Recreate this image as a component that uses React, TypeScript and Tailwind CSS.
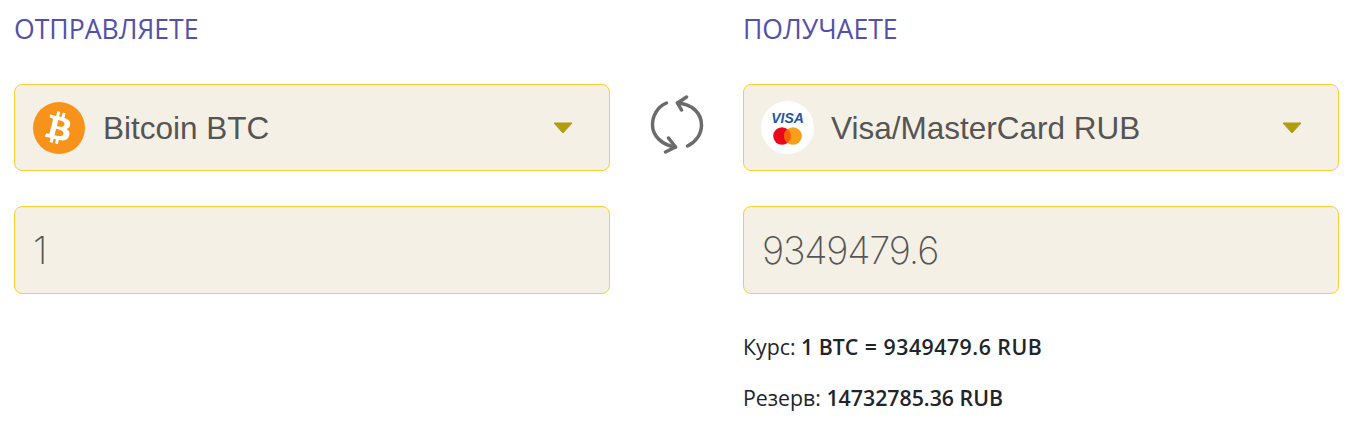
import { FaBtc } from 'react-icons/fa';

const Caret = () => (
    <svg width="20" height="12" viewBox="0 0 20 12" className="shrink-0">
        <path d="M1 1 H19 L10 11 Z" fill="#b39c0c" stroke="#b39c0c" strokeWidth="1" strokeLinejoin="round" />
    </svg>
);

const SwapIcon = () => (
    <svg width="56" height="60" viewBox="0 0 56 60" fill="none" stroke="#6b6b6b" strokeWidth="3.5" strokeLinecap="round" strokeLinejoin="round">
        <path d="M17.5 8 C8 12 3.5 21 3.5 30 C3.5 41 13 50 26.5 52" />
        <path d="M19.5 43 L26.5 52 L16.5 57" />
        <path d="M38.5 51 C47 47 52.5 39 52.5 30 C52.5 18 43 9 28.5 8" />
        <path d="M37.5 2 L28.5 8 L32.5 15" />
    </svg>
);

const BtcLogo = () => (
    <div className="w-[52px] h-[52px] ml-[1px] mr-[1px] rounded-full bg-[#f7931a] flex items-center justify-center shrink-0">
        <FaBtc className="w-[32px] h-[32px] text-white rotate-[14deg]" />
    </div>
);

const CardLogo = () => (
    <div className="w-[53px] h-[53px] rounded-full bg-white flex flex-col items-center justify-center shrink-0">
        <span className="font-['Liberation_Sans',sans-serif] italic font-bold text-[14px] leading-[14px] text-[#23569f]">VISA</span>
        <svg width="29" height="18" viewBox="0 0 29 18" className="mt-[2px]">
            <circle cx="9" cy="9" r="8.8" fill="#e8091e" />
            <circle cx="20" cy="9" r="8.8" fill="#f79e1b" />
            <path d="M14.5 2.1 A8.8 8.8 0 0 1 14.5 15.9 A8.8 8.8 0 0 1 14.5 2.1 Z" fill="#fb5f00" />
        </svg>
    </div>
);

const Select = ({ logo, label }: { logo: React.ReactNode; label: string }) => (
    <div className="h-[87px] rounded-[8px] border border-[#fccf2f] bg-[#f5f0e5] flex items-center pl-[17px] pr-[36px]">
        {logo}
        <span className="ml-[17px] pt-[2px] flex-1 font-['Liberation_Sans',sans-serif] text-[31.5px] text-[#555555]">{label}</span>
        <Caret />
    </div>
);

const Amount = ({ value }: { value: string }) => (
    <div className="h-[88px] mt-[35px] rounded-[8px] border border-[#fccf2f] bg-[#f5f0e5] flex items-center pl-[18px] font-['Inter',sans-serif] font-[250] text-[38px] tracking-[-1.2px] text-[#555555]">
        {value}
    </div>
);

const Title = ({ children }: { children: string }) => (
    <h2 className="h-[84px] pt-[11px] font-['Open_Sans',sans-serif] text-[26.6px] leading-[36px] text-[#5450aa]">{children}</h2>
);

export default function App() {
    return (
        <div className="w-[1349px] h-[424px] bg-white flex pl-[14px] pr-[10px] font-['Open_Sans',sans-serif]">
            <div className="w-[596px]">
                <Title>ОТПРАВЛЯЕТЕ</Title>
                <Select logo={<BtcLogo />} label="Bitcoin BTC" />
                <Amount value="1" />
            </div>

            <div className="w-[133px] pt-[95px] flex justify-center">
                <SwapIcon />
            </div>

            <div className="w-[596px]">
                <Title>ПОЛУЧАЕТЕ</Title>
                <Select logo={<CardLogo />} label="Visa/MasterCard RUB" />
                <Amount value="9349479.6" />
                <div className="mt-[39px] text-[21.3px] leading-[28px] text-[#212529]">
                    <p>Курс: <b className="font-semibold">1 BTC <span className="mx-[1px]">=</span> <span className="tracking-[0.5px]">9349479.6 RUB</span></b></p>
                    <p className="mt-[23px]">Резерв: <b className="font-semibold">14732785.36 RUB</b></p>
                </div>
            </div>
        </div>
    );
}
